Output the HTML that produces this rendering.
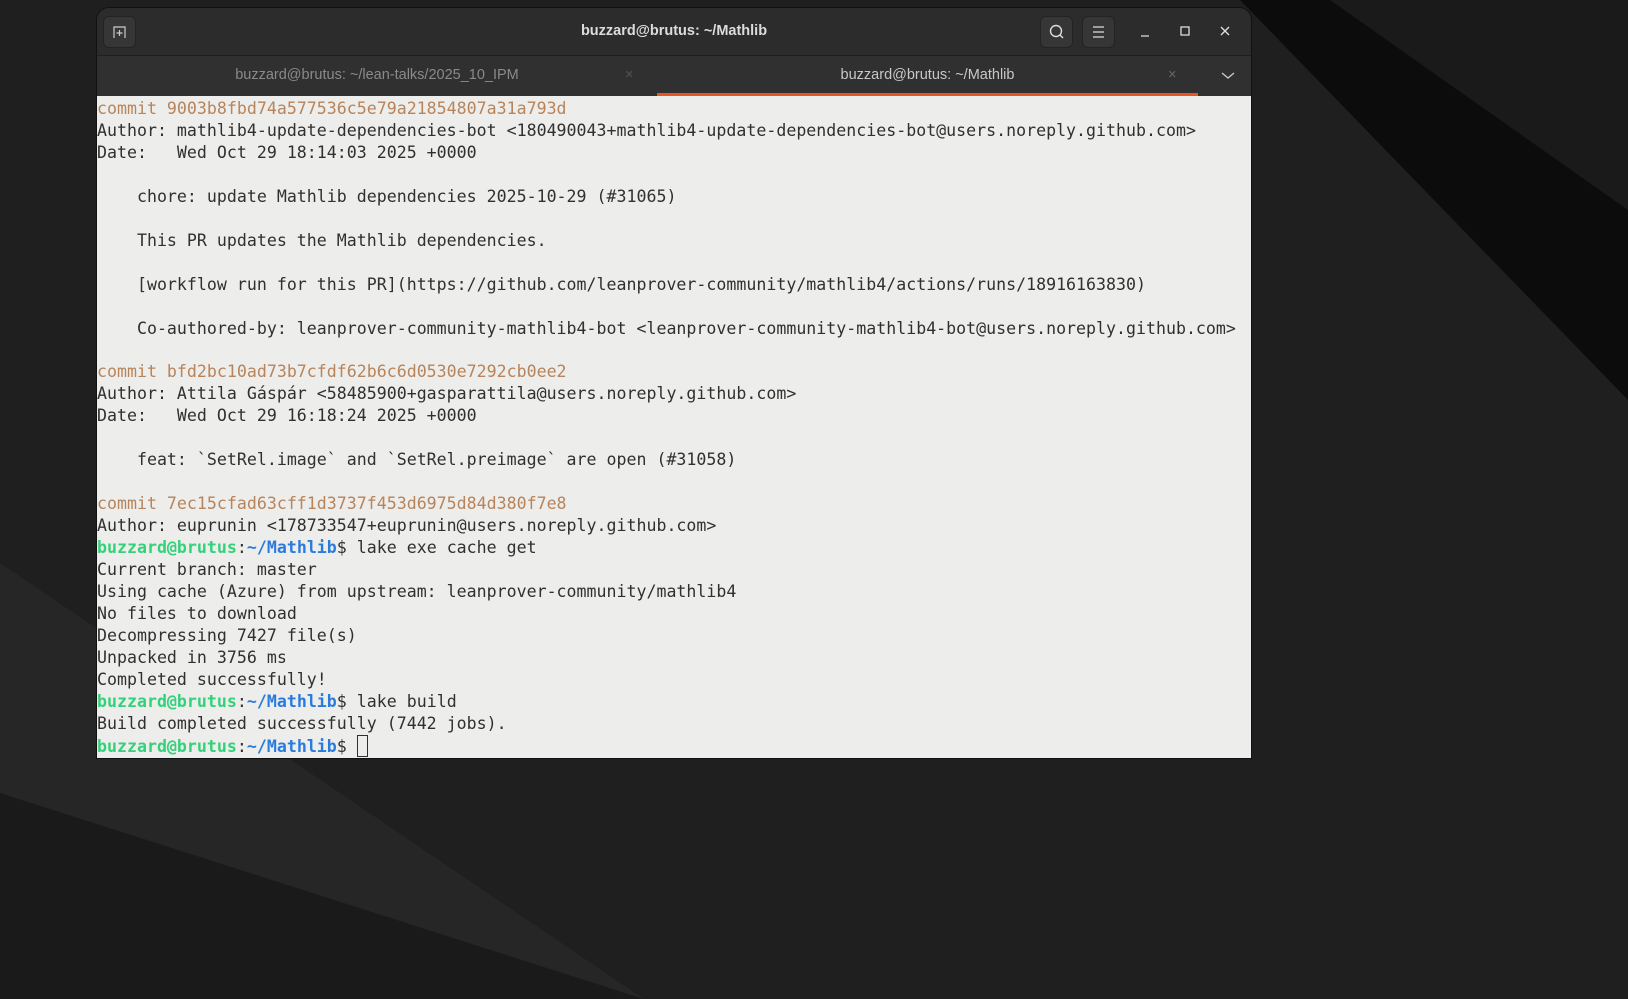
<!DOCTYPE html>
<html><head><meta charset="utf-8"><style>
html,body{margin:0;padding:0;width:1628px;height:999px;overflow:hidden;background:#1f1f1f;font-family:"Liberation Sans",sans-serif}
#bg{position:absolute;left:0;top:0}
.win{position:absolute;left:97px;top:8px;width:1154px;height:750px;border-radius:12px 12px 0 0;overflow:hidden;background:#2c2c2c;box-shadow:0 0 0 1px #111}
.title{position:absolute;left:0;top:0;width:100%;height:47px;background:#2c2c2c;border-bottom:1px solid #1f1f1f}
.title .t{position:absolute;left:0;right:0;top:15px;text-align:center;color:#dcdcdc;font-weight:bold;font-size:14.5px}
.btn{position:absolute;top:8px;width:33px;height:32px;border-radius:6px;background:#363636;border:1px solid #232323;box-sizing:border-box}
.tabs{position:absolute;left:0;top:48px;width:100%;height:40px;background:#303030}
.tab{position:absolute;top:1px;height:40px;line-height:36px;text-align:center;font-size:14.5px}
.term{position:absolute;left:0;top:88px;width:100%;height:662px;background:#ededeb;font-family:"DejaVu Sans Mono","Liberation Mono",monospace;font-size:16.6px;line-height:21.95px;color:#303030;white-space:pre;padding-top:2px;box-sizing:border-box}
.c{color:#b7845b}.g{color:#33d17a;font-weight:bold}.b{color:#2a7bde;font-weight:bold}
</style></head><body>
<svg id="bg" width="1628" height="999">
<rect width="1628" height="999" fill="#1f1f1f"/>
<polygon points="1240,0 1628,0 1628,400" fill="#0c0c0c"/>
<polygon points="1330,0 1628,0 1628,210" fill="#1a1a1a"/>
<polygon points="0,563 644,999 0,999" fill="#262626"/>
<polygon points="0,793 644,999 0,999" fill="#1a1a1a"/>
</svg>
<div class="win">
<div class="title">
<div class="btn" style="left:6px"><svg width="31" height="30"><path d="M10 21V10h11v11M15.5 13v6M12.5 16h6" stroke="#ccc" stroke-width="1.2" fill="none"/></svg></div>
<div class="t">buzzard@brutus: ~/Mathlib</div>
<div class="btn" style="left:943px"><svg width="31" height="30"><circle cx="15" cy="14" r="5.5" stroke="#ddd" stroke-width="1.4" fill="none"/><path d="M19 18l3 3" stroke="#ddd" stroke-width="1.4"/></svg></div>
<div class="btn" style="left:985px"><svg width="31" height="30"><path d="M10 10h11M10 15h11M10 20h11" stroke="#ddd" stroke-width="1.3"/></svg></div>
<svg style="position:absolute;left:1040px;top:15px" width="100" height="20"><path d="M4 13h8" stroke="#ddd" stroke-width="1.3"/><rect x="44" y="4" width="8" height="8" stroke="#ddd" stroke-width="1.3" fill="none"/><path d="M84 4l8 8M92 4l-8 8" stroke="#ddd" stroke-width="1.4"/></svg>
</div>
<div class="tabs">
<div class="tab" style="left:0;width:560px;color:#8a8a8a">buzzard@brutus: ~/lean-talks/2025_10_IPM<span style="position:absolute;left:528px;color:#555">×</span></div>
<div class="tab" style="left:560px;width:541px;color:#c8c8c8">buzzard@brutus: ~/Mathlib<span style="position:absolute;left:511px;color:#666">×</span></div>
<div style="position:absolute;left:560px;bottom:0;width:541px;height:3px;background:#e95420"></div>
<svg style="position:absolute;left:1123px;top:14px" width="16" height="12"><path d="M2 3l6 5 6-5" stroke="#ccc" stroke-width="1.3" fill="none"/></svg>
</div>
<div class="term"><span class="c">commit 9003b8fbd74a577536c5e79a21854807a31a793d</span>
Author: mathlib4-update-dependencies-bot &lt;180490043+mathlib4-update-dependencies-bot@users.noreply.github.com&gt;
Date:   Wed Oct 29 18:14:03 2025 +0000

    chore: update Mathlib dependencies 2025-10-29 (#31065)

    This PR updates the Mathlib dependencies.

    [workflow run for this PR](https://github.com/leanprover-community/mathlib4/actions/runs/18916163830)

    Co-authored-by: leanprover-community-mathlib4-bot &lt;leanprover-community-mathlib4-bot@users.noreply.github.com&gt;

<span class="c">commit bfd2bc10ad73b7cfdf62b6c6d0530e7292cb0ee2</span>
Author: Attila Gáspár &lt;58485900+gasparattila@users.noreply.github.com&gt;
Date:   Wed Oct 29 16:18:24 2025 +0000

    feat: `SetRel.image` and `SetRel.preimage` are open (#31058)

<span class="c">commit 7ec15cfad63cff1d3737f453d6975d84d380f7e8</span>
Author: euprunin &lt;178733547+euprunin@users.noreply.github.com&gt;
<span class="g">buzzard@brutus</span>:<span class="b">~/Mathlib</span>$ lake exe cache get
Current branch: master
Using cache (Azure) from upstream: leanprover-community/mathlib4
No files to download
Decompressing 7427 file(s)
Unpacked in 3756 ms
Completed successfully!
<span class="g">buzzard@brutus</span>:<span class="b">~/Mathlib</span>$ lake build
Build completed successfully (7442 jobs).
<span class="g">buzzard@brutus</span>:<span class="b">~/Mathlib</span>$ <span style="display:inline-block;width:9px;height:20px;border:1px solid #303030;vertical-align:-5px"></span></div>
</div>
</body></html>
